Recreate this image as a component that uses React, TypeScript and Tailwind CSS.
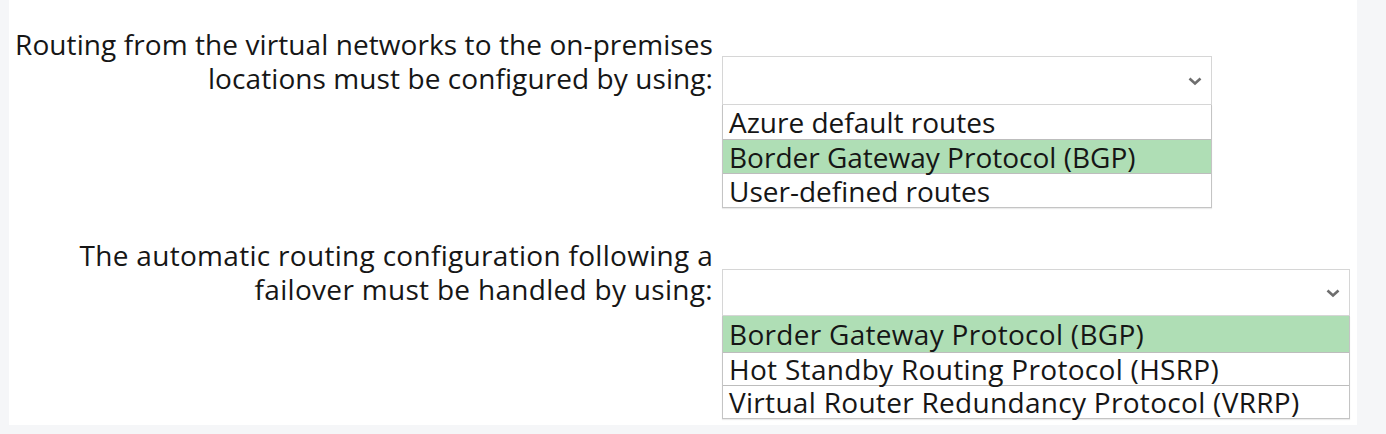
import React from 'react';

const Chevron = () => (
  <svg width="16" height="10" viewBox="0 0 16 10" className="shrink-0">
    <path d="M2.5 2.5 L8 7.5 L13.5 2.5" fill="none" stroke="#6e6e6e" strokeWidth="2.6" />
  </svg>
);

interface DropdownProps {
  width: string;
  selectH: string;
  options: { text: string; h: string; selected?: boolean }[];
}

const Dropdown: React.FC<DropdownProps> = ({ width, selectH, options }) => (
  <div className={`${width} flex flex-col`}>
    <div className={`${selectH} border border-[#d6d6d6] bg-white flex items-center justify-end pr-[8px]`}>
      <Chevron />
    </div>
    <div className="border border-t-0 border-[#c4c4c4] shadow-[0_1px_1px_rgba(0,0,0,0.08)]">
      {options.map((o, i) => (
        <div
          key={i}
          className={`${o.h} flex items-center pl-[6px] whitespace-nowrap leading-[30px] ${i > 0 ? 'border-t border-[#bdbdbd]' : ''} ${o.selected ? 'bg-[#afdeb5]' : 'bg-white'}`}
        >
          {o.text}
        </div>
      ))}
    </div>
  </div>
);

export default function App() {
  return (
    <div className="w-[1386px] h-[434px] bg-[#f5f6f8] overflow-hidden font-['Open_Sans',sans-serif] text-[#161616]">
      <div className="ml-[9px] w-[1348px] h-[425px] bg-white pt-[27px] text-[28px] leading-[34px]">
        {/* question 1 */}
        <div className="flex items-start">
          <div className="w-[704px] text-right whitespace-nowrap tracking-[0.08px]">
            <div>Routing from the virtual networks to the on-premises</div>
            <div>locations must be configured by using:</div>
          </div>
          <div className="ml-[9px] mt-[29px]">
            <Dropdown
              width="w-[490px]"
              selectH="h-[49px]"
              options={[
                { text: 'Azure default routes', h: 'h-[34px]' },
                { text: 'Border Gateway Protocol (BGP)', h: 'h-[34px]', selected: true },
                { text: 'User-defined routes', h: 'h-[34px]' },
              ]}
            />
          </div>
        </div>

        {/* question 2 */}
        <div className="flex items-start mt-[30px] tracking-[0.3px]">
          <div className="w-[704px] text-right whitespace-nowrap">
            <div>The automatic routing configuration following a</div>
            <div>failover must be handled by using:</div>
          </div>
          <div className="ml-[9px] mt-[31px]">
            <Dropdown
              width="w-[628px]"
              selectH="h-[47px]"
              options={[
                { text: 'Border Gateway Protocol (BGP)', h: 'h-[36px]', selected: true },
                { text: 'Hot Standby Routing Protocol (HSRP)', h: 'h-[33px]' },
                { text: 'Virtual Router Redundancy Protocol (VRRP)', h: 'h-[33px]' },
              ]}
            />
          </div>
        </div>
      </div>
    </div>
  );
}
